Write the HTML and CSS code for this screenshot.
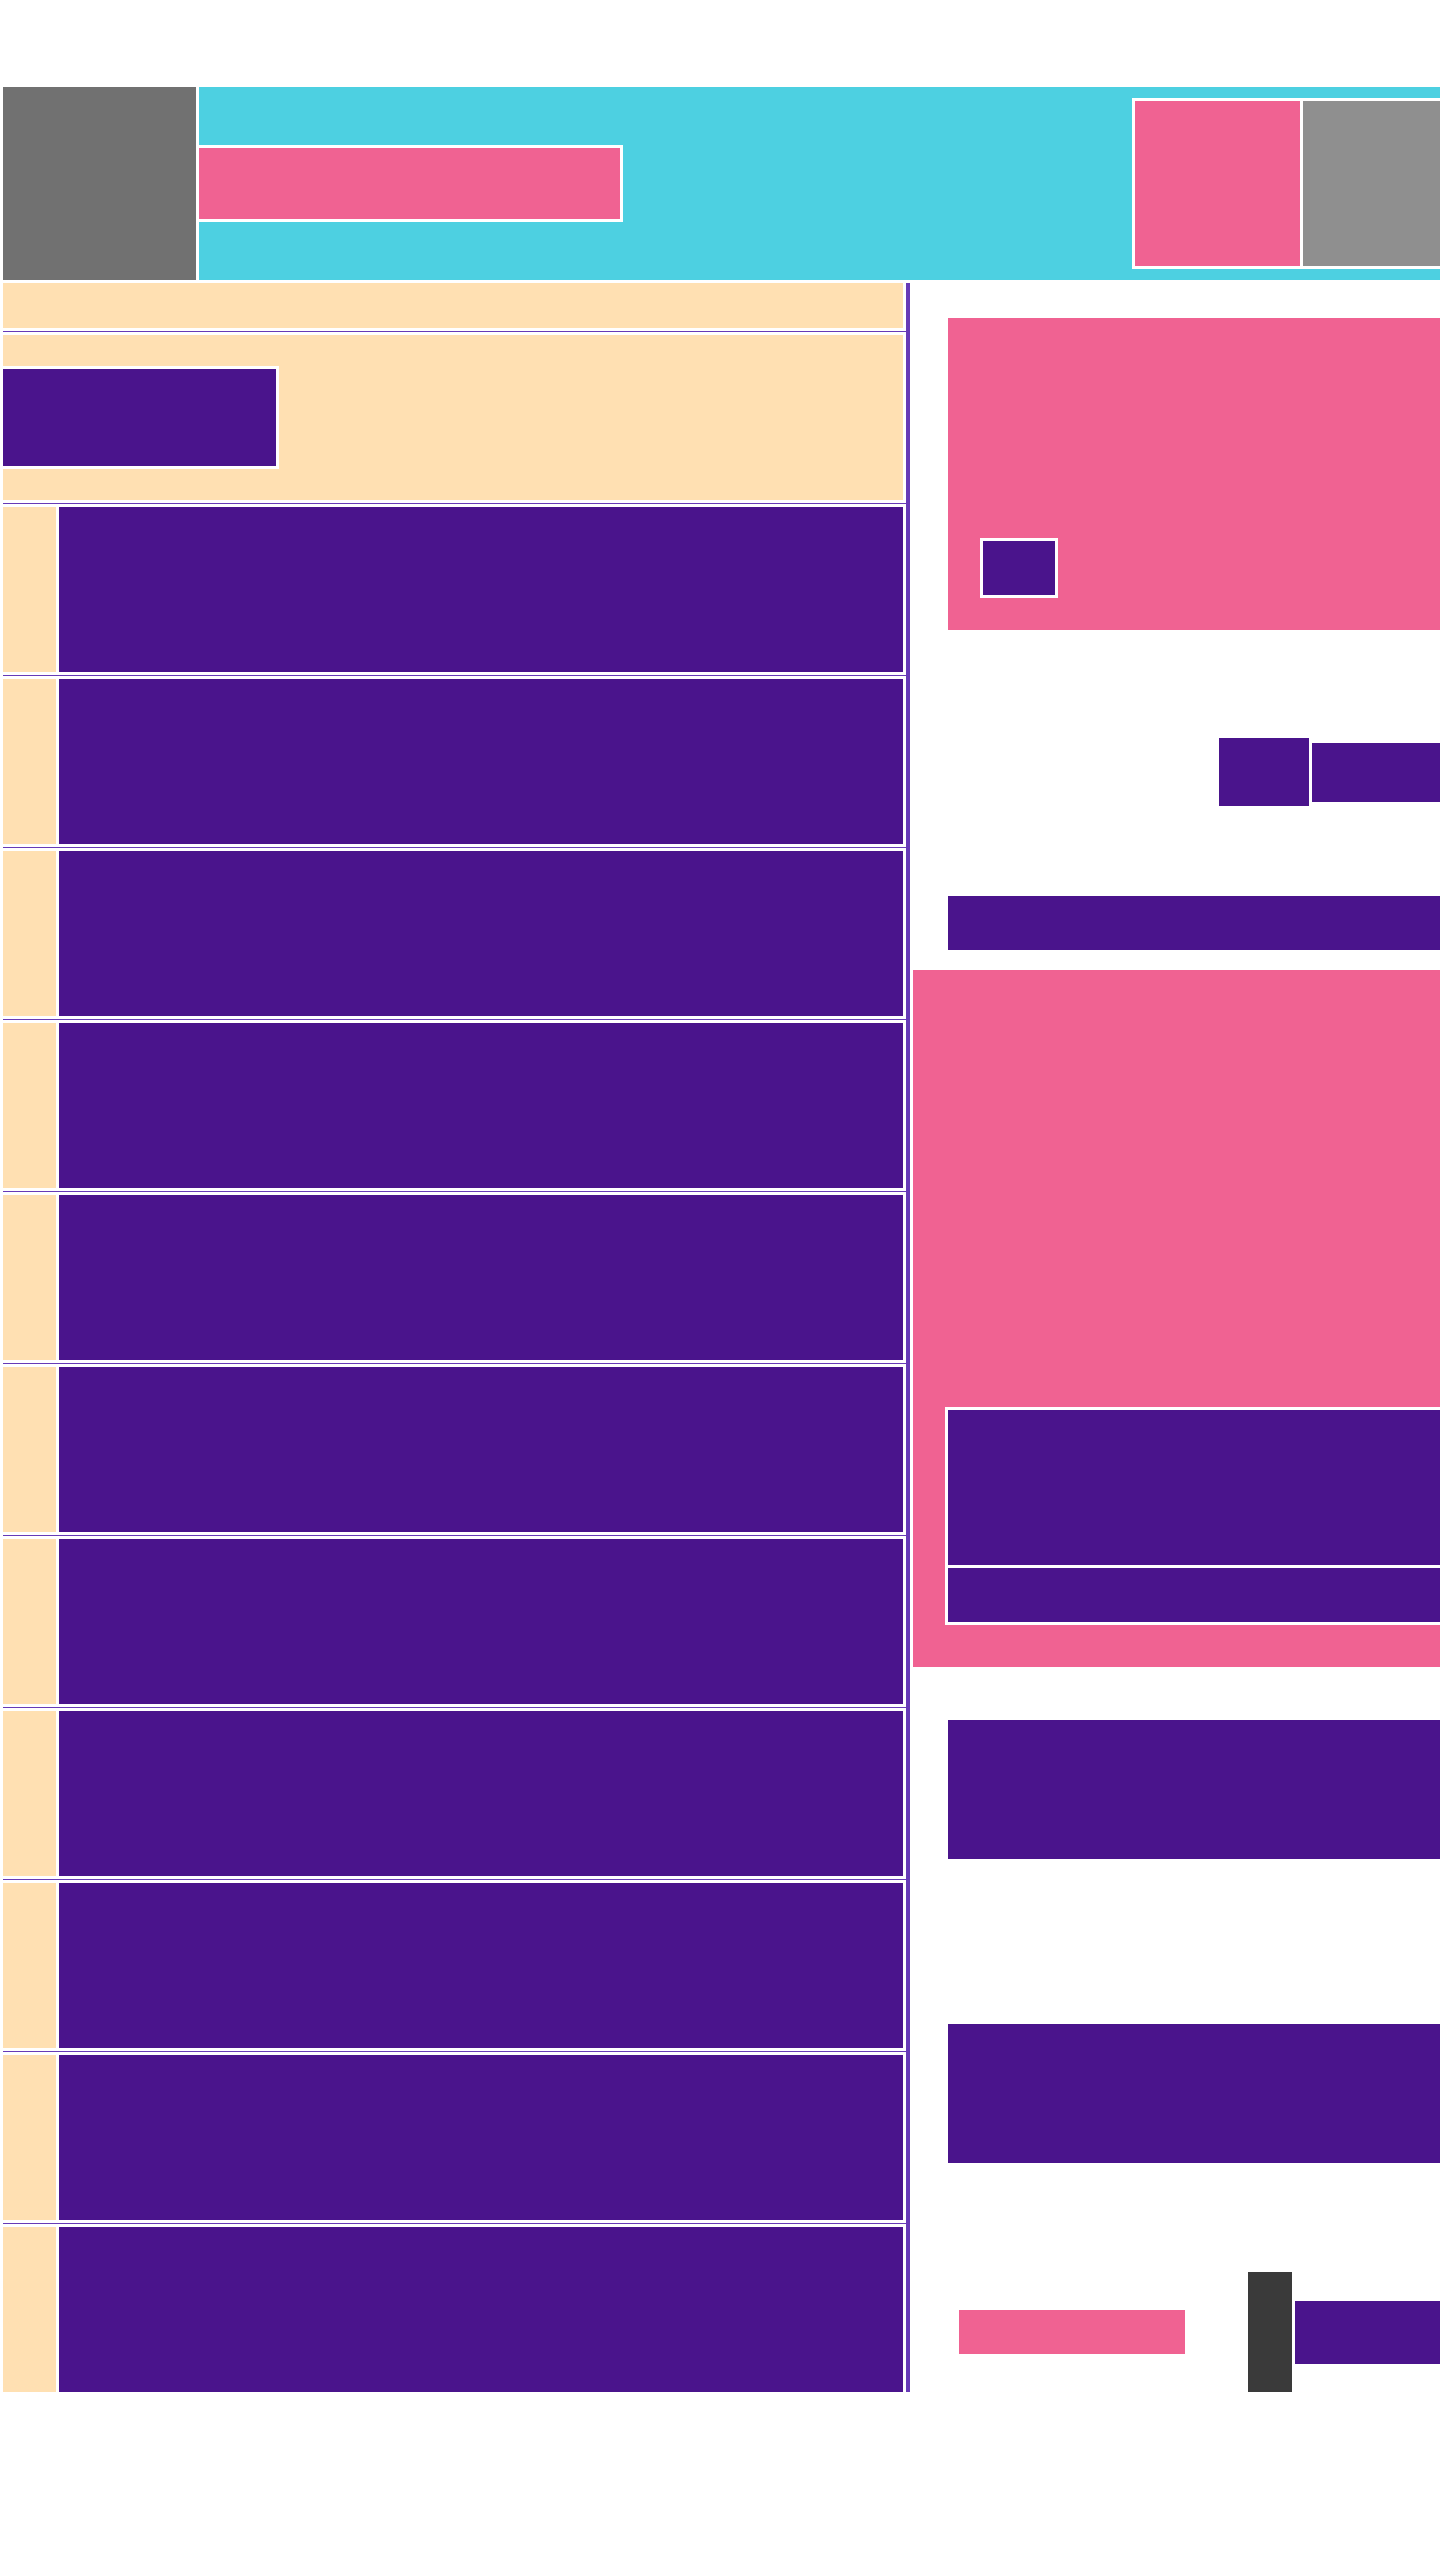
FILE: index.html
```html
<!DOCTYPE html>
<html lang="en">

<head>
  <meta charset="UTF-8">
  <meta name="viewport" content="width=device-width, initial-scale=1.0">
  <title>Board</title>
  <link rel="stylesheet" href="styles.css">
</head>

<body>
  <header class="site-header">
    <div class="logo"></div>
    <div class="topbar">
      <div class="title-bar"></div>
      <div class="account">
        <div class="account-avatar"></div>
        <div class="account-menu"></div>
      </div>
    </div>
  </header>

  <div class="main">
    <ul class="feed">
      <li class="feed-head"></li>
      <li class="feed-intro">
        <div class="intro-button"></div>
      </li>
      <li class="feed-row"><div class="row-thumb"></div><div class="row-body"></div></li>
      <li class="feed-row"><div class="row-thumb"></div><div class="row-body"></div></li>
      <li class="feed-row"><div class="row-thumb"></div><div class="row-body"></div></li>
      <li class="feed-row"><div class="row-thumb"></div><div class="row-body"></div></li>
      <li class="feed-row"><div class="row-thumb"></div><div class="row-body"></div></li>
      <li class="feed-row"><div class="row-thumb"></div><div class="row-body"></div></li>
      <li class="feed-row"><div class="row-thumb"></div><div class="row-body"></div></li>
      <li class="feed-row"><div class="row-thumb"></div><div class="row-body"></div></li>
      <li class="feed-row"><div class="row-thumb"></div><div class="row-body"></div></li>
      <li class="feed-row"><div class="row-thumb"></div><div class="row-body"></div></li>
      <li class="feed-row"><div class="row-thumb"></div><div class="row-body"></div></li>
    </ul>

    <aside class="sidebar">
      <div class="promo">
        <div class="promo-button"></div>
      </div>

      <div class="actions">
        <div class="action-main"></div>
        <div class="action-wide"></div>
      </div>

      <div class="search-bar"></div>

      <div class="feature">
        <div class="feature-card">
          <div class="feature-main"></div>
          <div class="feature-foot"></div>
        </div>
      </div>

      <div class="panel"></div>
      <div class="panel panel-far"></div>

      <div class="footer-row">
        <div class="footer-link"></div>
        <div class="footer-divider"></div>
        <div class="footer-cta"></div>
      </div>
    </aside>
  </div>
</body>

</html>
```

FILE: styles.css
```css
body {
  font-family: Arial, sans-serif;
  margin: 0;
  padding: 87px 0 0 3px;
  background-color: #fff;
  overflow-x: hidden;
}

/* header */

.site-header {
  display: flex;
  height: 193px;
  margin-bottom: 3px;
}

.logo {
  width: 193px;
  margin-right: 3px;
  background-color: #717171;
}

.topbar {
  flex: 1;
  display: flex;
  align-items: center;
  background-color: #4DD0E1;
}

.title-bar {
  width: 421px;
  height: 71px;
  background-color: #F06292;
  border: 3px solid #fff;
  border-left: none;
}

.account {
  flex: 1;
  display: flex;
  gap: 3px;
  height: 165px;
  margin-left: 509px;
  background-color: #fff;
  border: 3px solid #fff;
  border-right: none;
}

.account-avatar {
  width: 165px;
  background-color: #F06292;
}

.account-menu {
  flex: 1;
  background-color: #8F8F8F;
}

/* main */

.main {
  display: flex;
  align-items: flex-start;
}

.feed {
  list-style: none;
  width: 903px;
  margin: 0;
  padding: 0 4px 0 0;
  background-color: #673AB7;
}

.feed > li {
  margin-bottom: 1px;
  border-top: 3px solid #fff;
  border-right: 3px solid #fff;
  border-bottom: 3px solid #fff;
}

.feed > li.feed-head {
  height: 45px;
  border-top: none;
  background-color: #FFE0B2;
}

.feed-intro {
  display: flex;
  align-items: center;
  height: 165px;
  background-color: #FFE0B2;
}

.intro-button {
  width: 273px;
  height: 97px;
  background-color: #4A148C;
  border: 3px solid #fff;
  border-left: none;
}

.feed-row {
  display: flex;
  gap: 3px;
  height: 165px;
  background-color: #fff;
}

.feed > li.feed-row:last-child {
  margin-bottom: 0;
  border-bottom: none;
}

.row-thumb {
  width: 53px;
  background-color: #FFE0B2;
}

.row-body {
  flex: 1;
  background-color: #4A148C;
}

/* sidebar */

.sidebar {
  flex: 1;
  display: flex;
  flex-direction: column;
  margin-left: 3px;
}

.promo {
  display: flex;
  align-items: flex-end;
  height: 248px;
  margin: 35px 0 0 35px;
  padding: 32px;
  background-color: #F06292;
}

.promo-button {
  width: 72px;
  height: 54px;
  background-color: #4A148C;
  border: 3px solid #fff;
}

.actions {
  display: flex;
  align-items: center;
  gap: 3px;
  margin: 108px 0 0 306px;
}

.action-main {
  width: 90px;
  height: 68px;
  background-color: #4A148C;
}

.action-wide {
  flex: 1;
  height: 59px;
  background-color: #4A148C;
}

.search-bar {
  height: 54px;
  margin: 90px 0 0 35px;
  background-color: #4A148C;
}

.feature {
  display: flex;
  flex-direction: column;
  justify-content: flex-end;
  height: 655px;
  margin-top: 20px;
  padding: 0 0 42px 32px;
  background-color: #F06292;
}

.feature-card {
  display: flex;
  flex-direction: column;
  gap: 3px;
  background-color: #fff;
  border: 3px solid #fff;
  border-right: none;
}

.feature-main {
  height: 155px;
  background-color: #4A148C;
}

.feature-foot {
  height: 54px;
  background-color: #4A148C;
}

.panel {
  height: 139px;
  margin: 53px 0 0 35px;
  background-color: #4A148C;
}

.panel-far {
  margin-top: 165px;
}

.footer-row {
  display: flex;
  align-items: center;
  height: 120px;
  margin-top: 109px;
  padding-left: 46px;
}

.footer-link {
  width: 226px;
  height: 44px;
  margin-right: 63px;
  background-color: #F06292;
}

.footer-divider {
  align-self: stretch;
  width: 44px;
  margin-right: 3px;
  background-color: #3A3A3A;
}

.footer-cta {
  flex: 1;
  height: 63px;
  background-color: #4A148C;
}
```
